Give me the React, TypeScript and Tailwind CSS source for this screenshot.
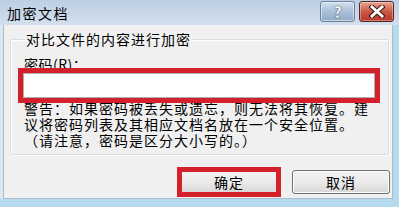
const FONT = "font-['Noto_Sans_CJK_SC','Noto_Sans',sans-serif]";

function HelpButton() {
  return (
    <div className="flex h-[21px] w-[35px] items-center justify-center rounded-[3px] border border-[#6b7f98] bg-gradient-to-b from-[#d3e0ee] via-[#a9c0d9] to-[#90abc8] shadow-[inset_0_0_0_1px_rgba(255,255,255,0.5)]">
      <span className="text-[15px] font-bold leading-none text-white [text-shadow:0_0_1px_#2d3f55,0_0_1px_#2d3f55]">?</span>
    </div>
  );
}

function CloseButton() {
  return (
    <div className="flex h-[21px] w-[35px] items-center justify-center rounded-[3px] border border-[#5a2720] bg-gradient-to-b from-[#e7a595] via-[#cc5645] to-[#b8382b] shadow-[inset_0_0_0_1px_rgba(255,255,255,0.35)]">
      <svg width="16" height="13" viewBox="0 0 16 13">
        <path d="M3 2 L13 11 M13 2 L3 11" stroke="#3b1510" strokeWidth="5" strokeLinecap="square" />
        <path d="M3 2 L13 11 M13 2 L3 11" stroke="#ffffff" strokeWidth="3" strokeLinecap="square" />
      </svg>
    </div>
  );
}

function Button({ label, marked }: { label: string; marked?: boolean }) {
  return (
    <div className="relative">
      <div className="flex h-[24px] w-[98px] items-center justify-center rounded-[3px] border border-[#707070] bg-gradient-to-b from-[#f2f2f2] via-[#ebebeb] to-[#d6d6d6] shadow-[inset_0_0_0_1px_#fcfcfc]">
        <span className="text-[14px] leading-none tracking-[1px] text-black">{label}</span>
      </div>
      {marked && <div className="absolute -inset-[3px] border-[5px] border-[#d4202a]" />}
    </div>
  );
}

const WARNING = [
  "警告：如果密码被丢失或遗忘，则无法将其恢复。建",
  "议将密码列表及其相应文档名放在一个安全位置。",
  "（请注意，密码是区分大小写的。）",
];

export default function App() {
  return (
    <div className={`flex h-[207px] w-[399px] flex-col overflow-hidden bg-[#b7dbee] ${FONT}`}>
      <div className="flex h-[25px] shrink-0 items-start bg-gradient-to-b from-[#bccfe4] to-[#d2dfed] pl-[7px] pr-[5px] pt-[1px]">
        <span className="mt-[4px] text-[14px] leading-[16px] tracking-[1.5px] text-black">加密文档</span>
        <div className="ml-auto flex gap-[4px]">
          <HelpButton />
          <CloseButton />
        </div>
      </div>

      <div className="flex min-h-0 flex-1">
        <div className="w-[4px] bg-[#dbe7f1]" />
        <div className="flex flex-1 flex-col border border-t-0 border-[#a8bccd] bg-[#f0f0f0]">
          <fieldset className="ml-[6px] mr-[3px] mt-[6px] h-[124px] border border-[#d5dfe5] px-[13px] shadow-[inset_1px_1px_0_#fff,1px_1px_0_#fff]">
            <legend className="ml-[1px] px-[1px] text-[14px] leading-[16px] tracking-[1px] text-black">对比文件的内容进行加密</legend>
            <div className="mt-[9px] text-[14px] leading-[16px] tracking-[0.5px] text-black">密码(R)：</div>
            <div className="relative mt-[1px]">
              <div className="ml-[-1px] h-[25px] w-[352px] border border-[#abadb3] bg-white" />
              <div className="absolute left-[-6px] top-[-5px] h-[35px] w-[362px] border-[5px] border-[#d4202a]" />
            </div>
            <div className="mt-[2px] text-[14px] leading-[16px] tracking-[1px] text-black">
              {WARNING.map((line) => (
                <div key={line} className="h-[16px] whitespace-nowrap">{line}</div>
              ))}
            </div>
          </fieldset>
          <div className="mt-[15px] flex justify-end gap-[14px] pr-[2px]">
            <Button label="确定" marked />
            <Button label="取消" />
          </div>
        </div>
        <div className="w-[8px]" />
      </div>
      <div className="h-[8px] shrink-0" />
    </div>
  );
}
